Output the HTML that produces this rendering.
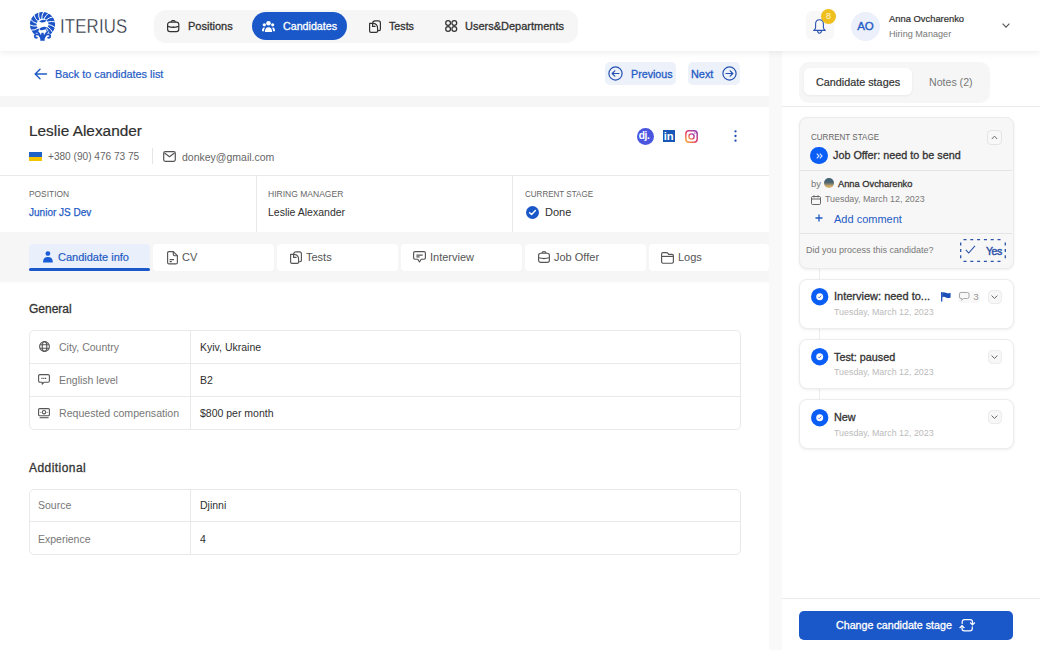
<!DOCTYPE html>
<html><head><meta charset="utf-8">
<style>
*{box-sizing:border-box;margin:0;padding:0}
html,body{width:1040px;height:650px;overflow:hidden;background:#f9f9f9;font-family:"Liberation Sans",sans-serif;color:#2f2f2f}
.a{position:absolute}
.t{position:absolute;white-space:nowrap;line-height:1}
.sb{-webkit-text-stroke:.3px currentColor}
svg{position:absolute;overflow:visible}
#hdr{left:0;top:0;width:1040px;height:51px;background:#fff;box-shadow:0 1px 7px rgba(0,0,0,.09);z-index:5}
</style></head><body>

<!-- HEADER -->
<div id="hdr" class="a">
  <!-- logo -->
  <svg style="left:29px;top:11.5px" width="28" height="29" viewBox="0 0 28 29">
    <g fill="#1d55c9">
      <path d="M5.74 22.43A12.6 12.6 0 1 1 21.26 22.43L16.50 17.70A6.0 6.0 0 1 0 10.50 17.70Z"/>
      <path d="M10.2 9.4Q13.6 6.6 17.8 8.6Q15.6 11 12.4 10.4Z"/>
      <path d="M10.4 16.6Q14.5 13.6 18.6 15.8Q15.6 18.8 11.2 18Z"/>
      <path d="M11.2 28.8L12.4 20.8L14.6 20.8L15.8 28.8Z"/>
    </g>
    <g fill="none" stroke="#fff" stroke-width="1"><path d="M9.13 16.16Q6.17 18.23 1.64 18.29"/><path d="M7.99 13.98Q4.44 14.59 0.30 12.73"/><path d="M7.89 11.51Q4.40 10.57 1.44 7.13"/><path d="M8.83 9.23Q6.07 6.90 4.84 2.54"/><path d="M10.65 7.56Q9.13 4.29 9.86 -0.19"/><path d="M12.71 6.86Q12.53 3.25 14.88 -0.63"/><path d="M14.98 6.99Q16.22 3.61 19.90 0.96"/><path d="M17.16 8.13Q19.72 5.59 24.18 4.74"/><path d="M18.67 10.09Q22.06 8.87 26.46 9.98"/><path d="M19.20 12.50Q22.79 12.82 26.31 15.69"/><path d="M18.67 14.91Q21.79 16.72 23.76 20.81"/><path d="M17.53 16.53Q19.84 19.30 20.30 23.81"/></g>
    <g fill="none" stroke="#1d55c9" stroke-width="1.8"><path d="M7.6 19.2Q10.8 21 12.3 27"/><path d="M19.4 19.2Q16.2 21 14.7 27"/><path d="M11.6 25.2Q10.6 21.8 7.4 22.4Q5.2 23.2 6 25.2Q7.2 26.4 8.4 25.2"/><path d="M15.4 25.2Q16.4 21.8 19.6 22.4Q21.8 23.2 21 25.2Q19.8 26.4 18.6 25.2"/></g>
  </svg>
  <div class="t" style="left:60px;top:17px;font-size:19.5px;color:#262c3a;letter-spacing:.2px;transform:scaleX(.86);transform-origin:0 0;-webkit-text-stroke:.35px #fff">ITERIUS</div>

  <!-- nav -->
  <div class="a" style="left:154px;top:9.5px;width:424px;height:33px;border-radius:12px;background:#f6f6f6"></div>
  <div class="a" style="left:252px;top:12px;width:95px;height:28px;border-radius:14px;background:#1a57c8"></div>

  <svg style="left:167px;top:19.8px" width="12.4" height="12.2" viewBox="0 0 12.4 12.2"><g fill="none" stroke="#333" stroke-width="1.2"><path d="M4.4 2.2V1.6Q4.4 .6 5.4 .6H7Q8 .6 8 1.6V2.2"/><rect x=".6" y="2.2" width="11.2" height="9.4" rx="2.4"/><path d="M.8 6.4Q6.2 8.4 11.6 6.4"/></g><circle cx="6.2" cy="7" r=".65" fill="#333"/></svg>
  <svg style="left:262px;top:21px" width="13" height="11" viewBox="0 0 13 11"><g fill="#fff"><circle cx="6.5" cy="2.3" r="2.3"/><circle cx="2.3" cy="3.8" r="1.6"/><circle cx="10.7" cy="3.8" r="1.6"/><path d="M2.9 11Q2.9 6.2 6.5 6.2Q10.1 6.2 10.1 11Z"/><path d="M0 10.2Q0 6.4 2 6.4Q2.6 6.4 2.9 6.8Q2 8 2 10.2Z"/><path d="M13 10.2Q13 6.4 11 6.4Q10.4 6.4 10.1 6.8Q11 8 11 10.2Z"/></g></svg>
  <svg style="left:368.5px;top:19.5px" width="12" height="13" viewBox="0 0 12 13"><g fill="none" stroke="#333" stroke-width="1.2" stroke-linejoin="round"><path d="M3.6 3.2Q3.8 1 6.2 .8L9.4 .8Q11.4 .8 11.4 2.8V9.3Q11.4 10.7 10 10.7H8.6"/><path d="M.6 3.4H3.6Q8.6 3.4 8.6 8.4V11Q8.6 12.4 7.2 12.4H2Q.6 12.4 .6 11Z"/><path d="M3.6 3.4V6.4H6.6"/></g></svg>
  <svg style="left:444.5px;top:20px" width="12.5" height="12" viewBox="0 0 12.5 12"><g fill="none" stroke="#333" stroke-width="1.25"><circle cx="3.1" cy="3" r="2.4"/><circle cx="9.3" cy="3" r="2.4"/><circle cx="3.1" cy="9" r="2.4"/><circle cx="9.3" cy="9" r="2.4"/></g></svg>
  <div class="t sb" style="left:188px;top:21px;font-size:11px;color:#333">Positions</div>
  <div class="t sb" style="left:283px;top:21px;font-size:10.7px;color:#fff">Candidates</div>
  <div class="t sb" style="left:389px;top:21px;font-size:10.7px;color:#333">Tests</div>
  <div class="t sb" style="left:465px;top:21px;font-size:11px;color:#333">Users&amp;Departments</div>

  <!-- bell -->
  <div class="a" style="left:805.5px;top:11px;width:28px;height:29px;border-radius:6px;background:#f8f8f8"></div>
  <svg style="left:812.5px;top:18.5px" width="13" height="15" viewBox="0 0 13 15"><path d="M6.5 .7Q2.6 .7 2.6 5V8.6Q2.6 10.2 .7 11.4H12.3Q10.4 10.2 10.4 8.6V5Q10.4 .7 6.5 .7ZM4.6 11.6Q4.6 14.2 6.5 14.2Q8.4 14.2 8.4 11.6" fill="none" stroke="#2a52b0" stroke-width="1.1" stroke-linejoin="round"/></svg>
  <div class="a" style="left:821px;top:9px;width:15px;height:15px;border-radius:50%;background:#efbf1e;color:#fff6d8;font-size:9px;line-height:15px;text-align:center">8</div>
  <svg style="left:1002px;top:23px" width="8" height="5" viewBox="0 0 8 5"><path d="M.6 .6L4 4.2L7.4 .6" fill="none" stroke="#555" stroke-width="1.1"/></svg>
  <!-- avatar -->
  <div class="a" style="left:851px;top:11.5px;width:29px;height:29px;border-radius:50%;background:#ebf0fa;color:#1f5bc4;font-size:11.5px;line-height:29px;text-align:center;-webkit-text-stroke:.35px #1f5bc4">AO</div>
  <div class="t sb" style="left:889px;top:14px;font-size:9.4px;color:#2f2f2f;-webkit-text-stroke-width:.2px">Anna Ovcharenko</div>
  <div class="t" style="left:889px;top:30px;font-size:9.1px;color:#777">Hiring Manager</div>
</div>

<!-- LEFT -->
<div class="a" style="left:0;top:51px;width:769px;height:45px;background:#fff"></div>
<div class="a" style="left:0;top:107px;width:769px;height:125px;background:#fff"></div>
<div class="a" style="left:0;top:281px;width:769px;height:369px;background:linear-gradient(#f6f6f6,#fcfcfc 1.5px,#fff 3px)"></div>

<div class="a" style="left:0;top:96px;width:769px;height:11px;background:#f6f6f6"></div>
<div class="a" style="left:0;top:232px;width:769px;height:49px;background:#f6f6f6"></div>
<!-- back row -->
<svg style="left:34px;top:68px" width="13" height="12" viewBox="0 0 13 12"><path d="M12.5 6H1.5M6 1.2L1.2 6L6 10.8" fill="none" stroke="#1f5bc4" stroke-width="1.4" stroke-linecap="round" stroke-linejoin="round"/></svg>
<div class="t sb" style="left:55px;top:69px;font-size:10.9px;color:#1f5bc4;-webkit-text-stroke-width:.2px">Back to candidates list</div>

<div class="a" style="left:605px;top:62px;width:71px;height:23px;border-radius:5px;background:#edf1fa"></div>
<svg style="left:608px;top:66px" width="15" height="15" viewBox="0 0 15 15"><circle cx="7.5" cy="7.5" r="6.6" fill="none" stroke="#2552b2" stroke-width="1.2"/><path d="M11 7.5H4.2M6.8 4.8L4.2 7.5L6.8 10.2" fill="none" stroke="#2552b2" stroke-width="1.2" stroke-linecap="round" stroke-linejoin="round"/></svg>
<div class="t sb" style="left:631px;top:69px;font-size:10.7px;color:#1f5bc4">Previous</div>
<div class="a" style="left:688px;top:62px;width:52px;height:23px;border-radius:5px;background:#edf1fa"></div>
<div class="t sb" style="left:691px;top:69px;font-size:10.9px;color:#1f5bc4">Next</div>
<svg style="left:722px;top:66px" width="15" height="15" viewBox="0 0 15 15"><circle cx="7.5" cy="7.5" r="6.6" fill="none" stroke="#2552b2" stroke-width="1.2"/><path d="M4 7.5H10.8M8.2 4.8L10.8 7.5L8.2 10.2" fill="none" stroke="#2552b2" stroke-width="1.2" stroke-linecap="round" stroke-linejoin="round"/></svg>

<!-- candidate card -->
<div class="t sb" style="left:29px;top:123px;font-size:15.4px;color:#2f2f2f;-webkit-text-stroke-width:.2px">Leslie Alexander</div>
<div class="a" style="left:29px;top:152px;width:13px;height:5px;background:#1e62c8"></div>
<div class="a" style="left:29px;top:157px;width:13px;height:4px;background:#f5c400"></div>
<div class="t" style="left:48px;top:152px;font-size:10.1px;color:#666">+380 (90) 476 73 75</div>
<div class="a" style="left:152px;top:148px;width:1px;height:16px;background:#e5e5e5"></div>
<svg style="left:163px;top:151px" width="13" height="11" viewBox="0 0 13 11"><rect x=".7" y=".7" width="11.6" height="9.6" rx="1.5" fill="none" stroke="#555" stroke-width="1.2"/><path d="M1.5 2L6.5 5.8L11.5 2" fill="none" stroke="#555" stroke-width="1.2"/></svg>
<div class="t" style="left:182px;top:152px;font-size:10.5px;color:#666">donkey@gmail.com</div>

<div class="a" style="left:0;top:175px;width:769px;height:1px;background:#e9e9e9"></div>
<div class="a" style="left:256px;top:175px;width:1px;height:57px;background:#e9e9e9"></div>
<div class="a" style="left:512px;top:175px;width:1px;height:57px;background:#e9e9e9"></div>
<div class="t" style="left:29px;top:189px;font-size:9.8px;color:#666;transform:scaleX(.855);transform-origin:0 0">POSITION</div>
<div class="t sb" style="left:29px;top:207px;font-size:10.9px;color:#1f5bc4;transform:scaleX(.92);transform-origin:0 0;-webkit-text-stroke-width:.25px">Junior JS Dev</div>
<div class="t" style="left:268px;top:189px;font-size:9.8px;color:#666;transform:scaleX(.87);transform-origin:0 0">HIRING MANAGER</div>
<div class="t" style="left:268px;top:207px;font-size:10.5px;color:#2f2f2f">Leslie Alexander</div>
<div class="t" style="left:525px;top:189px;font-size:9.8px;color:#666;transform:scaleX(.82);transform-origin:0 0">CURRENT STAGE</div>
<svg style="left:526px;top:206px" width="13" height="13" viewBox="0 0 13 13"><circle cx="6.5" cy="6.5" r="6.5" fill="#1a57c8"/><path d="M3.6 6.7L5.6 8.6L9.4 4.6" fill="none" stroke="#fff" stroke-width="1.4" stroke-linecap="round" stroke-linejoin="round"/></svg>
<div class="t" style="left:545px;top:207px;font-size:11px;color:#2f2f2f">Done</div>

<!-- tabs -->
<div class="a" style="left:29px;top:244px;width:121px;height:25px;border-radius:4px 4px 0 0;background:#e9effb"></div><div class="a" style="left:29px;top:268px;width:121px;height:3.3px;border-radius:2px;background:#1a57c8"></div>
<div class="a" style="left:153px;top:244px;width:121px;height:27px;border-radius:4px;background:#fff"></div>
<div class="a" style="left:277px;top:244px;width:121px;height:27px;border-radius:4px;background:#fff"></div>
<div class="a" style="left:401px;top:244px;width:121px;height:27px;border-radius:4px;background:#fff"></div>
<div class="a" style="left:525px;top:244px;width:121px;height:27px;border-radius:4px;background:#fff"></div>
<div class="a" style="left:649px;top:244px;width:120px;height:27px;border-radius:4px;background:#fff"></div>
<div class="t sb" style="left:58px;top:252px;font-size:11px;color:#1f5bc4;-webkit-text-stroke-width:.2px">Candidate info</div>
<div class="t" style="left:182px;top:252px;font-size:11px;color:#555">CV</div>
<div class="t" style="left:306px;top:252px;font-size:11px;color:#555">Tests</div>
<div class="t" style="left:430px;top:252px;font-size:11px;color:#555">Interview</div>
<div class="t" style="left:554px;top:252px;font-size:11px;color:#555">Job Offer</div>
<div class="t" style="left:678px;top:252px;font-size:11px;color:#555">Logs</div>


<!-- social -->
<div class="a" style="left:637px;top:127.5px;width:17px;height:17px;border-radius:50%;background:#4a55e0"></div>
<div class="t" style="left:638.8px;top:130.5px;font-size:10.2px;font-weight:700;color:#fff;letter-spacing:-.4px">dj.</div>
<div class="a" style="left:662.5px;top:130px;width:12.5px;height:12px;background:#1856b8"></div>
<div class="t" style="left:663.8px;top:130.8px;font-size:11.2px;font-weight:700;color:#fff;letter-spacing:-.2px">in</div>
<svg style="left:685px;top:129.5px" width="13" height="13" viewBox="0 0 13 13"><defs><linearGradient id="ig" x1="0" y1="1" x2="1" y2="0"><stop offset="0" stop-color="#f9b040"/><stop offset=".45" stop-color="#e8456a"/><stop offset="1" stop-color="#8a3ab9"/></linearGradient></defs><rect x=".8" y=".8" width="11.4" height="11.4" rx="3.2" fill="none" stroke="url(#ig)" stroke-width="1.5"/><circle cx="6.5" cy="6.5" r="2.6" fill="none" stroke="url(#ig)" stroke-width="1.4"/><circle cx="9.9" cy="3.1" r=".75" fill="#b13aa5"/></svg>
<svg style="left:734px;top:130px" width="3" height="12" viewBox="0 0 3 12"><g fill="#1f4fae"><circle cx="1.5" cy="1.3" r="1.15"/><circle cx="1.5" cy="6" r="1.15"/><circle cx="1.5" cy="10.7" r="1.15"/></g></svg>

<!-- tab icons -->
<svg style="left:42.8px;top:251.3px" width="10" height="12" viewBox="0 0 10 12"><g fill="#1a5bd8"><circle cx="4.9" cy="2.5" r="2.35"/><path d="M0 11.4Q0 6 4.9 6Q9.8 6 9.8 11.4Z"/></g></svg>
<svg style="left:166.5px;top:250.8px" width="11" height="14" viewBox="0 0 11 14"><g fill="none" stroke="#555" stroke-width="1.15" stroke-linejoin="round"><path d="M1.8 .6H6.3L10.4 4.7V11.4Q10.4 12.9 8.9 12.9H2Q.6 12.9 .6 11.4V1.8Q.6 .6 1.8 .6Z"/><path d="M6.3 .6V3.3Q6.3 4.7 7.7 4.7H10.4"/><path d="M2.6 8.6H7M2.6 10.6H4.8"/></g></svg>
<svg style="left:289.8px;top:250.8px" width="12" height="13" viewBox="0 0 12 13"><g fill="none" stroke="#555" stroke-width="1.15" stroke-linejoin="round"><path d="M3.6 3.2Q3.8 1 6.2 .8L9.4 .8Q11.4 .8 11.4 2.8V9.3Q11.4 10.7 10 10.7H8.6"/><path d="M.6 3.4H3.6Q8.6 3.4 8.6 8.4V11Q8.6 12.4 7.2 12.4H2Q.6 12.4 .6 11Z"/><path d="M3.6 3.4V6.4H6.6"/></g></svg>
<svg style="left:413px;top:251.3px" width="13" height="12" viewBox="0 0 13 12"><g fill="none" stroke="#555" stroke-width="1.15" stroke-linejoin="round"><path d="M2 .6H11Q12.4 .6 12.4 2V6.8Q12.4 8.2 11 8.2H8.2L6.5 11L4.8 8.2H2Q.6 8.2 .6 6.8V2Q.6 .6 2 .6Z"/><path d="M3.4 4.1H9.7M3.4 5.8H6.6"/></g></svg>
<svg style="left:537.6px;top:251.2px" width="12" height="12" viewBox="0 0 12 12"><g fill="none" stroke="#555" stroke-width="1.15"><path d="M4 2.2Q4 .6 6 .6Q8 .6 8 2.2"/><rect x=".6" y="2.2" width="10.8" height="9.2" rx="2.2"/><path d="M.8 6.8Q6 8.3 11.2 6.8"/></g><circle cx="6" cy="7.3" r=".6" fill="#555"/></svg>
<svg style="left:661px;top:251.6px" width="13" height="12" viewBox="0 0 13 12"><g fill="none" stroke="#555" stroke-width="1.15" stroke-linejoin="round"><path d="M.6 2Q.6 .6 2 .6H5.6Q6.4 .6 6.9 1.3L7.6 2.4H11Q12.4 2.4 12.4 3.8V9.8Q12.4 11.2 11 11.2H2Q.6 11.2 .6 9.8Z"/><path d="M.6 4.4H12.4"/></g></svg>

<!-- table icons -->
<svg style="left:38.6px;top:340.7px" width="11" height="11" viewBox="0 0 11 11"><g fill="none" stroke="#555" stroke-width="1.1"><circle cx="5.5" cy="5.5" r="4.9"/><ellipse cx="5.5" cy="5.5" rx="2.3" ry="4.9"/><path d="M1.2 3.8H9.8M1.2 7.2H9.8"/></g></svg>
<svg style="left:38px;top:374px" width="12" height="11" viewBox="0 0 12 11"><g fill="none" stroke="#555" stroke-width="1.1" stroke-linejoin="round"><path d="M2 .6H10Q11.4 .6 11.4 2V6.8Q11.4 8.2 10 8.2H6.2L4.2 10.2V8.2H2Q.6 8.2 .6 6.8V2Q.6 .6 2 .6Z"/><path d="M3.4 4.4H8.6" stroke-dasharray="1.2 .6"/></g></svg>
<svg style="left:38px;top:408px" width="12" height="10.5" viewBox="0 0 12 10.5"><g fill="none" stroke="#555" stroke-width="1.1"><rect x=".6" y=".6" width="10.8" height="7.2" rx="1"/><circle cx="6" cy="4.2" r="1.7"/><path d="M1.6 9.7H10.6"/></g><g fill="#555"><circle cx="2.8" cy="4.2" r=".5"/><circle cx="9.2" cy="4.2" r=".5"/></g></svg>
<!-- General -->
<div class="t sb" style="left:29px;top:303px;font-size:12px;color:#333">General</div>
<div class="a" style="left:29px;top:330px;width:712px;height:100px;border:1px solid #e9e9e9;border-radius:5px"></div>
<div class="a" style="left:30px;top:363px;width:710px;height:1px;background:#e9e9e9"></div>
<div class="a" style="left:30px;top:396px;width:710px;height:1px;background:#e9e9e9"></div>
<div class="a" style="left:190px;top:331px;width:1px;height:98px;background:#e9e9e9"></div>
<div class="t" style="left:59px;top:342px;font-size:10.5px;color:#777">City, Country</div>
<div class="t" style="left:59px;top:375px;font-size:10.5px;color:#777">English level</div>
<div class="t" style="left:59px;top:408px;font-size:10.6px;color:#777">Requested compensation</div>
<div class="t" style="left:200px;top:342px;font-size:10.5px;color:#2f2f2f">Kyiv, Ukraine</div>
<div class="t" style="left:200px;top:375px;font-size:10.5px;color:#2f2f2f">B2</div>
<div class="t" style="left:200px;top:408px;font-size:10.5px;color:#2f2f2f">$800 per month</div>

<!-- Additional -->
<div class="t sb" style="left:29px;top:462px;font-size:12px;letter-spacing:.45px;color:#333">Additional</div>
<div class="a" style="left:29px;top:488.5px;width:712px;height:66px;border:1px solid #e9e9e9;border-radius:5px"></div>
<div class="a" style="left:30px;top:521px;width:710px;height:1px;background:#e9e9e9"></div>
<div class="a" style="left:190px;top:489px;width:1px;height:65px;background:#e9e9e9"></div>
<div class="t" style="left:38px;top:500px;font-size:10.5px;color:#777">Source</div>
<div class="t" style="left:38px;top:534px;font-size:10.5px;color:#777">Experience</div>
<div class="t" style="left:200px;top:500px;font-size:10.5px;color:#2f2f2f">Djinni</div>
<div class="t" style="left:200px;top:534px;font-size:10.5px;color:#2f2f2f">4</div>


<!-- RIGHT -->
<div class="a" style="left:782px;top:51px;width:258px;height:599px;background:#fff"></div>
<div class="a" style="left:799px;top:62px;width:191px;height:41px;border-radius:10px;background:#f6f6f6"></div>
<div class="a" style="left:804px;top:68px;width:108px;height:27px;border-radius:6px;background:#fff;box-shadow:0 1px 3px rgba(0,0,0,.05)"></div>
<div class="t sb" style="left:816px;top:77px;font-size:10.8px;color:#333;-webkit-text-stroke-width:.2px">Candidate stages</div>
<div class="t" style="left:929px;top:77px;font-size:10.6px;color:#777">Notes (2)</div>
<div class="a" style="left:782px;top:106px;width:258px;height:1px;background:#ececec"></div>

<!-- current stage card -->
<div class="a" style="left:819px;top:268px;width:1px;height:140px;background:#ececec"></div>
<div class="a" style="left:799px;top:117px;width:214.5px;height:151.5px;border-radius:8px;background:#f7f7f7;border:1px solid #ebebeb;box-shadow:0 1px 3px rgba(0,0,0,.07)"></div>
<div class="t" style="left:811px;top:132px;font-size:9.8px;color:#666;transform:scaleX(.82);transform-origin:0 0">CURRENT STAGE</div>
<div class="a" style="left:987px;top:130px;width:15px;height:15px;border-radius:4px;background:#f8f8f8;border:1px solid #e4e4e4"></div>
<svg style="left:991px;top:135px" width="7" height="5" viewBox="0 0 7 5"><path d="M.8 4L3.5 1.2L6.2 4" fill="none" stroke="#666" stroke-width="1"/></svg>
<div class="a" style="left:810.4px;top:147.1px;width:17.4px;height:17.4px;border-radius:50%;background:#0a5ef5"></div>
<svg style="left:815.5px;top:152.5px" width="7" height="6" viewBox="0 0 7 6"><path d="M.8 .6L3 3L.8 5.4M3.8 .6L6 3L3.8 5.4" fill="none" stroke="#cfe0ff" stroke-width="1.2"/></svg>
<div class="t sb" style="left:833px;top:150px;font-size:10.8px;color:#333">Job Offer: need to be send</div>
<div class="a" style="left:800px;top:170px;width:212px;height:1px;background:#e4e4e4"></div>
<div class="t" style="left:811px;top:179px;font-size:9.5px;color:#777">by</div>
<div class="a" style="left:824px;top:178.2px;width:10px;height:10px;border-radius:50%;background:linear-gradient(#3d5f73 0%,#4f6670 45%,#c9a86a 80%,#d8b878 100%)"></div>
<div class="t sb" style="left:838px;top:180px;font-size:9.3px;color:#333">Anna Ovcharenko</div>
<svg style="left:811px;top:195px" width="10" height="10" viewBox="0 0 10 10"><rect x=".5" y="1.5" width="9" height="8" rx="1.2" fill="none" stroke="#666" stroke-width="1"/><path d="M.5 4H9.5M3 .3V2.5M7 .3V2.5" stroke="#666" stroke-width="1"/></svg>
<div class="t" style="left:825px;top:195px;font-size:8.9px;color:#777">Tuesday, March 12, 2023</div>
<svg style="left:815px;top:214px" width="8" height="8" viewBox="0 0 8 8"><path d="M4 .5V7.5M.5 4H7.5" stroke="#1f5bc4" stroke-width="1.3"/></svg>
<div class="t" style="left:834px;top:214px;font-size:11px;color:#1f5bc4">Add comment</div>
<div class="a" style="left:800px;top:233px;width:212px;height:1px;background:#e4e4e4"></div>
<div class="t" style="left:806px;top:246px;font-size:9px;color:#777">Did you process this candidate?</div>
<svg style="left:960px;top:239px" width="46" height="23" viewBox="0 0 46 23"><path d="M3.5 .7H43" fill="none" stroke="#2a52a8" stroke-width="1.3" stroke-dasharray="3 3.8"/><path d="M3.5 22.3H43" fill="none" stroke="#2a52a8" stroke-width="1.3" stroke-dasharray="3 3.8"/><path d="M.7 3.5V20.5" fill="none" stroke="#2a52a8" stroke-width="1.3" stroke-dasharray="3 3.4"/><path d="M45.3 3.5V20.5" fill="none" stroke="#2a52a8" stroke-width="1.3" stroke-dasharray="3 3.4"/></svg>
<svg style="left:964.5px;top:244.5px" width="11" height="9" viewBox="0 0 11 9"><path d="M.8 4.8L3.7 8L10 .8" fill="none" stroke="#2a52a8" stroke-width="1.1"/></svg>
<div class="t sb" style="left:986px;top:246px;font-size:10.5px;color:#2a52a8;letter-spacing:-.5px;-webkit-text-stroke-width:.45px">Yes</div>

<!-- stage cards -->
<div class="a" style="left:798.5px;top:278.5px;width:215px;height:50px;border-radius:8px;background:#fff;border:1px solid #ececec;box-shadow:0 1px 3px rgba(0,0,0,.07)"></div>
<div class="a" style="left:798.5px;top:338.8px;width:215px;height:50px;border-radius:8px;background:#fff;border:1px solid #ececec;box-shadow:0 1px 3px rgba(0,0,0,.07)"></div>
<div class="a" style="left:798.5px;top:399.3px;width:215px;height:50px;border-radius:8px;background:#fff;border:1px solid #ececec;box-shadow:0 1px 3px rgba(0,0,0,.07)"></div>

<svg style="left:810.5px;top:287.8px" width="17.4" height="17.4" viewBox="0 0 17.4 17.4"><circle cx="8.7" cy="8.7" r="8.7" fill="#0a5ef5"/><circle cx="8.7" cy="8.7" r="3.5" fill="#fff"/><path d="M7.2 8.8L8.3 9.9L10.3 7.6" fill="none" stroke="#4a6ad0" stroke-width=".9"/></svg>
<svg style="left:810.5px;top:348px" width="17.4" height="17.4" viewBox="0 0 17.4 17.4"><circle cx="8.7" cy="8.7" r="8.7" fill="#0a5ef5"/><circle cx="8.7" cy="8.7" r="3.5" fill="#fff"/><path d="M7.2 8.8L8.3 9.9L10.3 7.6" fill="none" stroke="#4a6ad0" stroke-width=".9"/></svg>
<svg style="left:810.5px;top:409px" width="17.4" height="17.4" viewBox="0 0 17.4 17.4"><circle cx="8.7" cy="8.7" r="8.7" fill="#0a5ef5"/><circle cx="8.7" cy="8.7" r="3.5" fill="#fff"/><path d="M7.2 8.8L8.3 9.9L10.3 7.6" fill="none" stroke="#4a6ad0" stroke-width=".9"/></svg>

<div class="t sb" style="left:834px;top:291px;font-size:11px;color:#333">Interview: need to...</div>
<div class="t" style="left:834px;top:308px;font-size:8.9px;color:#bbb">Tuesday, March 12, 2023</div>
<div class="t sb" style="left:834px;top:352px;font-size:10.8px;color:#333">Test: paused</div>
<div class="t" style="left:834px;top:368px;font-size:8.9px;color:#bbb">Tuesday, March 12, 2023</div>
<div class="t sb" style="left:834px;top:412px;font-size:10.8px;color:#333">New</div>
<div class="t" style="left:834px;top:429px;font-size:8.9px;color:#bbb">Tuesday, March 12, 2023</div>

<div class="a" style="left:987.5px;top:290px;width:14px;height:13.5px;border-radius:4px;background:#f7f7f7;border:1px solid #ececec"></div><svg style="left:991px;top:294.8px" width="7" height="4" viewBox="0 0 7 4"><path d="M.6 .6L3.5 3.4L6.4 .6" fill="none" stroke="#666" stroke-width="1"/></svg>
<div class="a" style="left:987.5px;top:350px;width:14px;height:13.5px;border-radius:4px;background:#f7f7f7;border:1px solid #ececec"></div><svg style="left:991px;top:354.8px" width="7" height="4" viewBox="0 0 7 4"><path d="M.6 .6L3.5 3.4L6.4 .6" fill="none" stroke="#666" stroke-width="1"/></svg>
<div class="a" style="left:987.5px;top:410px;width:14px;height:13.5px;border-radius:4px;background:#f7f7f7;border:1px solid #ececec"></div><svg style="left:991px;top:414.8px" width="7" height="4" viewBox="0 0 7 4"><path d="M.6 .6L3.5 3.4L6.4 .6" fill="none" stroke="#666" stroke-width="1"/></svg>

<svg style="left:940.5px;top:291.8px" width="10" height="9.5" viewBox="0 0 10 9.5"><path d="M.7 0V9.5" stroke="#1a4fb8" stroke-width="1.3"/><path d="M1.2 .6Q3 -.2 5 .8Q7 1.8 9.6 .8V5.4Q7 6.4 5 5.4Q3 4.4 1.2 5.2Z" fill="#1a4fb8"/></svg>
<div class="a" style="left:957.5px;top:290.7px;width:22.5px;height:12.8px;border-radius:4px;background:#f8f8f8"></div>
<svg style="left:958.9px;top:292.4px" width="10.5" height="9" viewBox="0 0 10.5 9"><path d="M2 .5H8.5Q10 .5 10 2V5Q10 6.5 8.5 6.5H4.4L2.8 8.3V6.5H2Q.5 6.5 .5 5V2Q.5 .5 2 .5Z" fill="none" stroke="#aaa" stroke-width="1" stroke-linejoin="round"/></svg>
<div class="t" style="left:973.3px;top:292px;font-size:9.8px;color:#999">3</div>

<!-- bottom -->
<div class="a" style="left:782px;top:598px;width:258px;height:1px;background:#ececec"></div>
<div class="a" style="left:799px;top:611px;width:214px;height:29px;border-radius:5px;background:#1a57c8"></div>
<div class="t sb" style="left:836px;top:620px;font-size:10.7px;color:#fff">Change candidate stage</div>
<svg style="left:959px;top:618.8px" width="16.5" height="12.5" viewBox="0 0 16.5 12.5"><g fill="none" stroke="#fff" stroke-width="1.2" stroke-linecap="round" stroke-linejoin="round"><path d="M3.2 4.6V3Q3.2 .7 5.5 .7H11.2Q13.5 .7 13.5 3V5.6"/><path d="M11.4 3.8L13.5 5.8L15.6 3.8"/><path d="M13.3 7.9V9.5Q13.3 11.8 11 11.8H5.3Q3 11.8 3 9.5V6.9"/><path d="M.9 8.7L3 6.7L5.1 8.7"/></g></svg>


</body></html>
